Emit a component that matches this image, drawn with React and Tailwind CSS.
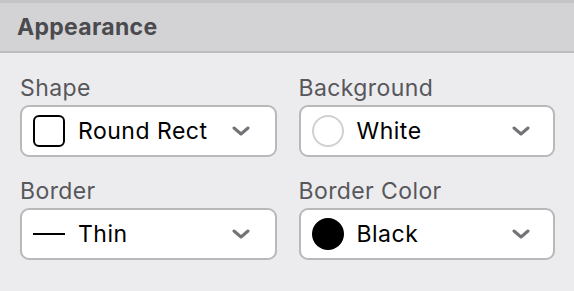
import React from 'react';

const Chevron = () => (
    <svg width="18" height="10" viewBox="0 0 18 10" className="shrink-0">
        <path d="M2 2 L9 8 L16 2" fill="none" stroke="#727277" strokeWidth="3" strokeLinecap="round" strokeLinejoin="round" />
    </svg>
);

function Picker({ label, icon, value, chevronPad }) {
    return (
        <div className="flex flex-col">
            <div className="h-[26px] leading-[26px] text-[23px] tracking-[0.4px] text-[#57575c]">{label}</div>
            <div className={`mt-[4px] flex h-[52px] items-center rounded-[9px] border-2 border-[#b9b9bc] bg-white pl-[11px] ${chevronPad}`}>
                <div className="flex h-[32px] w-[32px] shrink-0 items-center justify-center">{icon}</div>
                <span className="ml-[13px] flex-1 text-[23px] tracking-[0.5px] text-black">{value}</span>
                <Chevron />
            </div>
        </div>
    );
}

export default function App() {
    return (
        <div className="h-[291px] w-[574px] bg-[#ececee]" style={{ fontFamily: 'Inter, "Noto Sans", sans-serif' }}>
            <div className="flex h-[53px] items-center border-t-[3px] border-b-2 border-t-[#c4c4c6] border-b-[#bdbdc0] bg-[#d3d3d5] pl-[17px]">
                <span className="text-[23px] font-bold tracking-[0.3px] text-[#4a4a4f]">Appearance</span>
            </div>
            <div className="grid grid-cols-2 gap-x-[22px] gap-y-[21px] pl-[20px] pr-[19px] pt-[22px]">
                <Picker
                    label="Shape"
                    value="Round Rect"
                    chevronPad="pr-[25px]"
                    icon={<div className="h-[32px] w-[32px] rounded-[6px] border-2 border-black" />}
                />
                <Picker
                    label="Background"
                    value="White"
                    chevronPad="pr-[23px]"
                    icon={<div className="h-[32px] w-[32px] rounded-full border-2 border-[#d0d0d3] bg-white" />}
                />
                <Picker
                    label="Border"
                    value="Thin"
                    chevronPad="pr-[25px]"
                    icon={<div className="h-[2px] w-[32px] bg-black" />}
                />
                <Picker
                    label="Border Color"
                    value="Black"
                    chevronPad="pr-[23px]"
                    icon={<div className="h-[32px] w-[32px] rounded-full bg-black" />}
                />
            </div>
        </div>
    );
}
